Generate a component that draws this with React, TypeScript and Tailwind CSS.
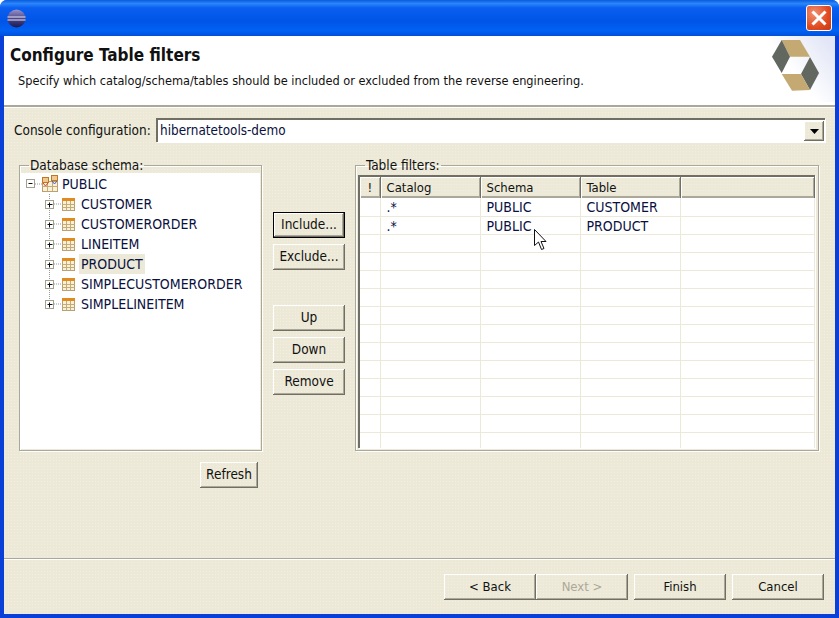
import type { ReactNode } from 'react'

const font = "[font-family:'DejaVu_Sans_Condensed','DejaVu_Sans',sans-serif] [font-stretch:condensed]"
const bevel = 'shadow-[inset_-1px_-1px_0_#716f64,inset_1px_1px_0_#ffffff,inset_-2px_-2px_0_#aca899]'
const etched = 'border border-[#aca899] shadow-[1px_1px_0_#ffffff,inset_1px_1px_0_#ffffff]'
const dither = 'bg-[#ece9d8] bg-[radial-gradient(#f4eedb_0.7px,transparent_0.8px)] bg-[length:3px_3px]'

function Btn({ children, className = '', disabled = false, text = 'text-[13.5px]' }: { children: ReactNode; className?: string; disabled?: boolean; text?: string }) {
    return (
        <button className={`h-[26px] leading-none ${text} ${disabled ? 'text-[#aca899]' : 'text-[#111]'} ${bevel} ${dither} ${className}`}>
            {children}
        </button>
    )
}

function TableIcon({ x, y }: { x: number; y: number }) {
    return (
        <g transform={`translate(${x} ${y})`}>
            <rect x="0.5" y="0.5" width="12" height="12" fill="#f8f0d8" stroke="#b8a070" />
            <rect x="0" y="0" width="13" height="3" fill="#e08a20" />
            <path d="M0.5 6.5H12.5M0.5 9.5H12.5M4.5 3V12.5M8.5 3V12.5" stroke="#c4ac78" fill="none" />
        </g>
    )
}

function ExpandBox({ x, y, open }: { x: number; y: number; open?: boolean }) {
    return (
        <g>
            <rect x={x - 4} y={y - 4} width="8" height="8" fill="#ffffff" stroke="#a0a090" />
            <path d={open ? `M${x - 2} ${y}H${x + 2}` : `M${x - 2} ${y}H${x + 3}M${x} ${y - 2}V${y + 3}`} stroke="#111" fill="none" />
        </g>
    )
}

function RootRow() {
    return (
        <div className="flex h-5 items-center">
            <svg width="41" height="20" viewBox="0 0 41 20" className="shrink-0">
                <path d="M14 10H21" stroke="#999" strokeDasharray="1 1" fill="none" />
                <ExpandBox x={9.5} y={9.5} open />
                <rect x="21.5" y="7.5" width="15" height="10" fill="#f8f0d8" stroke="#b8a070" />
                <path d="M21.5 12.5H36.5M26.5 8V17.5M31.5 8V17.5" stroke="#c4ac78" fill="none" />
                <rect x="21.5" y="3.5" width="6" height="5" fill="#f0c890" stroke="#c07820" />
                <path d="M22 9L24.5 12L27 9" stroke="#d04040" fill="none" />
                <rect x="30.5" y="1.5" width="6" height="5" fill="#f0c890" stroke="#c07820" />
                <path d="M31 7L33.5 10L36 7" stroke="#4060d0" fill="none" />
            </svg>
            <span className="text-[14px] text-[#0a1040]">PUBLIC</span>
        </div>
    )
}

function ChildRow({ name, selected, last }: { name: string; selected?: boolean; last?: boolean }) {
    return (
        <div className="flex h-5 items-center">
            <svg width="58" height="20" viewBox="0 0 58 20" className="shrink-0">
                <path d={last ? 'M28.5 0V10' : 'M28.5 0V20'} stroke="#999" strokeDasharray="1 1" fill="none" />
                <path d="M33 10H40" stroke="#999" strokeDasharray="1 1" fill="none" />
                <ExpandBox x={28.5} y={10.5} />
                <TableIcon x={41} y={4} />
            </svg>
            <span className={`flex h-5 items-center px-[2px] text-[14px] text-[#0a1040] ${selected ? 'bg-[#ece9d8]' : ''}`}>{name}</span>
        </div>
    )
}

function GroupBox({ title, children, className = '' }: { title: string; children: ReactNode; className?: string }) {
    return (
        <fieldset className={`${etched} h-[294px] ${className}`}>
            <legend className="ml-[9px] h-4 px-[1px] text-[13.5px] leading-4 text-[#111]">{title}</legend>
            {children}
        </fieldset>
    )
}

const filters = [
    { catalog: '.*', schema: 'PUBLIC', table: 'CUSTOMER' },
    { catalog: '.*', schema: 'PUBLIC', table: 'PRODUCT' },
]
const emptyRows = Array.from({ length: 12 })
const headCell = `h-[21px] border-r border-[#716f64] text-[13px] font-normal text-[#111] shadow-[inset_1px_1px_0_#ffffff,inset_0_-2px_0_#aca899,inset_-1px_0_0_#aca899] ${dither}`
const cell = 'h-[18px] border-r border-b border-[#ece9d8] p-0 pl-[6px] pt-[1px] text-[14px] leading-none text-[#0a1040]'

export default function App() {
    return (
        <div className={`${font} flex h-[618px] w-[839px] flex-col overflow-hidden rounded-t-[7px] bg-[#0a3fd8]`}>
            {/* Title bar */}
            <div className="flex h-9 shrink-0 items-center justify-between bg-[linear-gradient(#0a5cdc_0%,#2a86fa_10%,#0a5ff0_22%,#0055e8_60%,#0062f4_85%,#0050dc_100%)] pl-[7px] pr-[7px]">
                <svg width="19" height="19" viewBox="0 0 19 19">
                    <defs>
                        <linearGradient id="eclipse" x1="0" y1="0" x2="0" y2="1">
                            <stop offset="0" stopColor="#9a94c8" />
                            <stop offset="0.5" stopColor="#4c468c" />
                            <stop offset="1" stopColor="#1a1a50" />
                        </linearGradient>
                    </defs>
                    <circle cx="9.5" cy="9.5" r="9" fill="url(#eclipse)" />
                    <path d="M0.5 8H18.5M0.5 11H18.5" stroke="#e8e8f4" fill="none" />
                </svg>
                <button className="flex h-[26px] w-[26px] items-center justify-center rounded-[3px] border border-white bg-[radial-gradient(circle_at_30%_30%,#f09070,#e04a20_60%,#c83810)]">
                    <svg width="18" height="18" viewBox="0 0 18 18">
                        <path d="M2.5 2.5L15.5 15.5M15.5 2.5L2.5 15.5" stroke="#ffffff" strokeWidth="3" fill="none" />
                    </svg>
                </button>
            </div>

            <div className={`mx-1 mb-1 flex min-h-0 flex-1 flex-col ${dither}`}>
                {/* Header banner */}
                <div className="flex h-[71px] shrink-0 justify-between border-b-2 border-b-[#aca899] bg-white shadow-[0_1px_0_#ffffff]">
                    <div>
                        <h1 className="pl-[6px] pt-[9px] text-[17px] leading-5 font-bold text-[#111]">Configure Table filters</h1>
                        <p className="pl-[14px] pt-[6px] text-[12.65px] leading-5 text-[#111]">
                            Specify which catalog/schema/tables should be included or excluded from the reverse engineering.
                        </p>
                    </div>
                    <svg width="67" height="66" viewBox="0 0 67 66" className="shrink-0">
                        <defs>
                            <linearGradient id="wash" x1="0" y1="1" x2="1" y2="0.2">
                                <stop offset="0.45" stopColor="#ffffff" />
                                <stop offset="1" stopColor="#e2e6f6" />
                            </linearGradient>
                        </defs>
                        <rect width="67" height="66" fill="url(#wash)" />
                        <polygon points="13.7,4 32,4 42,20.7 22,20.7" fill="#c4aa72" />
                        <polygon points="13.7,4 4,20.7 13.7,37 22,20.7" fill="#62675f" />
                        <polygon points="42,21 33,38 42,54 51,37" fill="#62675f" />
                        <polygon points="13.7,38 33,38 42,54 24,54.7" fill="#c4aa72" />
                    </svg>
                </div>

                {/* Console configuration */}
                <div className="mt-[11px] flex h-6 shrink-0 items-center pl-[10px] pr-[10px]">
                    <span className="w-[142px] shrink-0 whitespace-nowrap text-[13.5px] text-[#111]">Console configuration:</span>
                    <div className="flex h-6 flex-1 items-center justify-between border-t-2 border-l-2 border-t-[#716f64] border-l-[#716f64] bg-white pl-[2px] pr-[1px] shadow-[1px_1px_0_#ffffff]">
                        <span className="text-[13.4px] text-[#0a1040]">hibernatetools-demo</span>
                        <div className={`flex h-5 w-5 items-center justify-center ${bevel} ${dither}`}>
                            <svg width="9" height="5" viewBox="0 0 9 5">
                                <polygon points="0,0 9,0 4.5,5" fill="#000" />
                            </svg>
                        </div>
                    </div>
                </div>

                {/* Main area */}
                <div className="ml-[15px] mt-[15px] flex shrink-0 items-start">
                    <div className="flex w-[243px] shrink-0 flex-col items-end">
                        <GroupBox title="Database schema:" className="w-full">
                            <div className="mx-[1px] h-[276px] bg-white pt-[1px]">
                                <RootRow />
                                <ChildRow name="CUSTOMER" />
                                <ChildRow name="CUSTOMERORDER" />
                                <ChildRow name="LINEITEM" />
                                <ChildRow name="PRODUCT" selected />
                                <ChildRow name="SIMPLECUSTOMERORDER" />
                                <ChildRow name="SIMPLELINEITEM" last />
                            </div>
                        </GroupBox>
                        <Btn className="mr-1 mt-[11px] w-[58px] pb-[1px]">Refresh</Btn>
                    </div>

                    <div className="ml-[11px] flex w-[72px] shrink-0 flex-col pt-[55px]">
                        <Btn className="border border-black">Include...</Btn>
                        <Btn className="mt-[6px]">Exclude...</Btn>
                        <Btn className="mt-[35px]">Up</Btn>
                        <Btn className="mt-[6px]">Down</Btn>
                        <Btn className="mt-[6px]">Remove</Btn>
                    </div>

                    <GroupBox title="Table filters:" className="ml-[10px] w-[464px] shrink-0">
                        <div className="relative ml-[2px] mr-[3px] mt-[2px] h-[273px] overflow-hidden border-t-2 border-l-2 border-t-[#716f64] border-l-[#716f64] bg-white shadow-[1px_1px_0_#ffffff]">
                            <table className="w-full table-fixed border-collapse">
                                <thead>
                                    <tr>
                                        <th className={`${headCell} w-[20px] text-center`}>!</th>
                                        <th className={`${headCell} w-[100px] pl-[6px] text-left`}>Catalog</th>
                                        <th className={`${headCell} w-[100px] pl-[6px] text-left`}>Schema</th>
                                        <th className={`${headCell} w-[100px] pl-[6px] text-left`}>Table</th>
                                        <th className={headCell}></th>
                                    </tr>
                                </thead>
                                <tbody>
                                    {filters.map((f) => (
                                        <tr key={f.table}>
                                            <td className={cell}></td>
                                            <td className={cell}>{f.catalog}</td>
                                            <td className={cell}>{f.schema}</td>
                                            <td className={cell}>{f.table}</td>
                                            <td className={cell}></td>
                                        </tr>
                                    ))}
                                    {emptyRows.map((_, i) => (
                                        <tr key={i}>
                                            <td className={cell}></td>
                                            <td className={cell}></td>
                                            <td className={cell}></td>
                                            <td className={cell}></td>
                                            <td className={cell}></td>
                                        </tr>
                                    ))}
                                </tbody>
                            </table>
                            {/* Mouse pointer */}
                            <svg width="13" height="22" viewBox="0 0 13 22" className="absolute left-[174px] top-[52px]">
                                <path d="M0.5 0.5V16.5L4.5 13L7.5 20.5L10 19.5L7 12.5H12L0.5 0.5Z" fill="#ffffff" stroke="#111" />
                            </svg>
                        </div>
                    </GroupBox>
                </div>

                {/* Footer */}
                <div className="mt-auto flex shrink-0 justify-end border-t border-t-[#aca899] pb-[14px] pr-[11px] pt-[15px] shadow-[inset_0_1px_0_#ffffff]">
                    <Btn text="text-[13px]" className="w-[92px] pb-[1px]">&lt; Back</Btn>
                    <Btn text="text-[13px]" className="w-[92px] pb-[1px]" disabled>Next &gt;</Btn>
                    <Btn text="text-[13px]" className="ml-[6px] w-[92px] pb-[1px]">Finish</Btn>
                    <Btn text="text-[13px]" className="ml-[6px] w-[92px] pb-[1px]">Cancel</Btn>
                </div>
            </div>
        </div>
    )
}
